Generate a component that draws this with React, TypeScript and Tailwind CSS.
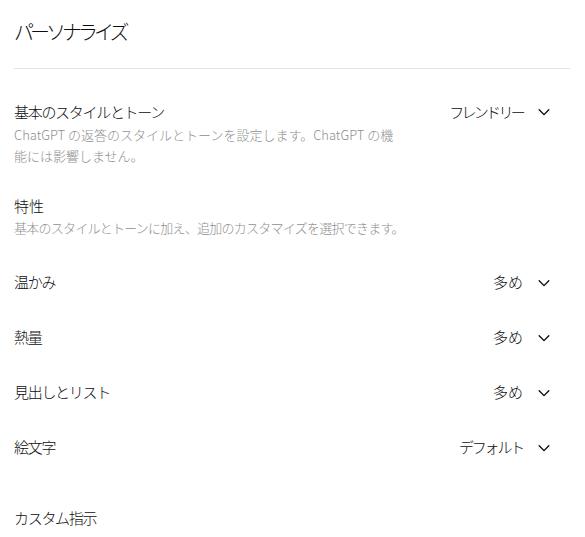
import React from 'react'

const font = { fontFamily: '"Noto Sans CJK JP", "Noto Sans", sans-serif' }

const Chevron = () => (
  <svg width="14" height="14" viewBox="0 0 16 16" fill="none" className="ml-[14px]">
    <path d="M2.5 5.5 8 11l5.5-5.5" stroke="#0d0d0d" strokeWidth="1.6" strokeLinecap="round" strokeLinejoin="round" />
  </svg>
)

const Select = ({ value, tracking }: { value: string; tracking: string }) => (
  <button className="flex items-center text-[15px] font-light text-[#0d0d0d] pr-[20px]">
    <span className={tracking}>{value}</span>
    <Chevron />
  </button>
)

const rows = [
  { label: '温かみ', value: '多め', tracking: 'tracking-[0px]' },
  { label: '熱量', value: '多め', tracking: 'tracking-[0px]' },
  { label: '見出しとリスト', value: '多め', tracking: 'tracking-[0px]' },
  { label: '絵文字', value: 'デフォルト', tracking: 'tracking-[-2.2px]' },
]

export default function App() {
  return (
    <div className="w-[585px] h-[537px] bg-white overflow-hidden px-[14px] font-light" style={font}>
      {/* Header */}
      <div className="h-[69px] flex items-center border-b border-[#e5e5e5] w-[556px]">
        <h2 className="text-[20px] text-[#0d0d0d] tracking-[-4px] -mt-[4px]">パーソナライズ</h2>
      </div>

      {/* Base style */}
      <div className="flex items-start justify-between mt-[32px]">
        <div>
          <div className="text-[15px] text-[#0d0d0d] tracking-[-1.3px] leading-[22px]">基本のスタイルとトーン</div>
          <p className="text-[13px] text-[#8f8f8f] leading-[21px] w-[384px] mt-[1px]">
            ChatGPT の返答のスタイルとトーンを設定します。ChatGPT の機能には影響しません。
          </p>
        </div>
        <Select value="フレンドリー" tracking="tracking-[-2.7px]" />
      </div>

      {/* Characteristics */}
      <div className="mt-[29px]">
        <div className="text-[15px] text-[#0d0d0d] leading-[22px]">特性</div>
        <p className="text-[13px] text-[#8f8f8f] leading-[21px] tracking-[-0.75px]">
          基本のスタイルとトーンに加え、追加のカスタマイズを選択できます。
        </p>
      </div>

      <div className="mt-[17px]">
        {rows.map((r) => (
          <div key={r.label} className="flex items-center justify-between h-[55px]">
            <span className="text-[15px] text-[#0d0d0d] tracking-[-1.3px]">{r.label}</span>
            <Select value={r.value} tracking={r.tracking} />
          </div>
        ))}
      </div>

      <div className="mt-[32px] text-[15px] text-[#0d0d0d] tracking-[-1.3px]">カスタム指示</div>
    </div>
  )
}
